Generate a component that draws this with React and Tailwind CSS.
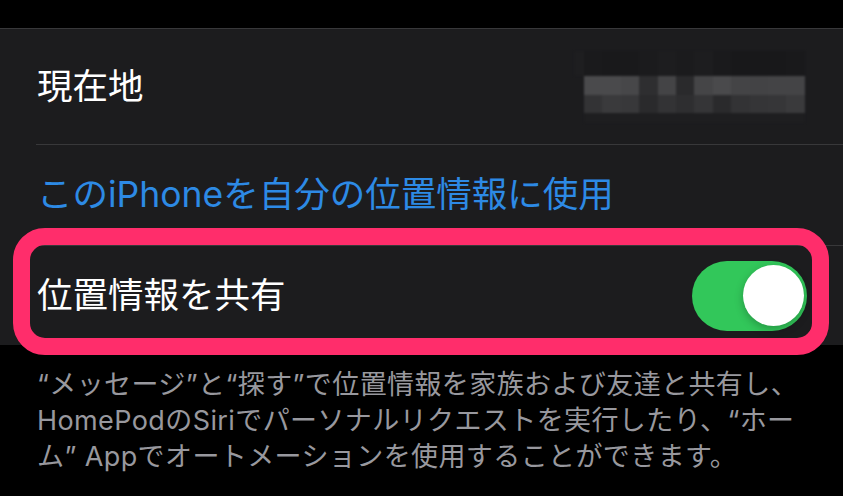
import React from "react";

const font = {
  fontFamily: '"Inter", "Noto Sans CJK JP", sans-serif',
};

// pixelated (blurred) value of the current location
const blurTop = [
  "bg-[#1a1a1c]", "bg-[#19191b]", "bg-[#19191b]", "bg-[#1b1b1d]", "bg-[#1d1d1f]", "bg-[#1b1b1d]",
  "bg-[#1d1d1f]", "bg-[#1a1a1c]", "bg-[#18181a]", "bg-[#18181a]", "bg-[#18181a]", "bg-[#19191b]",
];
const blurMid = [
  "bg-[#4a4a4c]", "bg-[#4a4a4c]", "bg-[#474749]", "bg-[#2e2e30]", "bg-[#444446]", "bg-[#2a2a2c]",
  "bg-[#454547]", "bg-[#4a4a4c]", "bg-[#444446]", "bg-[#434345]", "bg-[#444446]", "bg-[#444446]",
];
const blurLow = [
  "bg-[#333335]", "bg-[#3a3a3c]", "bg-[#38383a]", "bg-[#2a2a2c]", "bg-[#333335]", "bg-[#2e2e30]",
  "bg-[#353537]", "bg-[#2a2a2c]", "bg-[#333335]", "bg-[#353537]", "bg-[#363638]", "bg-[#3a3a3c]",
];

function BlurredValue() {
  return (
    <div className="flex flex-col blur-[1px]">
      <div className="flex h-[25px] pl-[10px] bg-[#1e1e20]">
        {blurTop.map((c, i) => (
          <div key={i} className={`w-[18.4px] ${c}`} />
        ))}
      </div>
      <div className="flex h-[19px] pl-[10px]">
        {blurMid.map((c, i) => (
          <div key={i} className={`w-[18.4px] ${c}`} />
        ))}
      </div>
      <div className="flex h-[18px] pl-[10px]">
        {blurLow.map((c, i) => (
          <div key={i} className={`w-[18.4px] ${c}`} />
        ))}
      </div>
      <div className="h-[10px] ml-[10px] w-[221px] bg-[#1e1e20]" />
    </div>
  );
}

function Toggle() {
  return (
    <div className="flex h-[70px] w-[115px] items-center justify-end rounded-full bg-[#32c75a] pr-[3px]">
      <div className="h-[61px] w-[61px] rounded-full bg-white shadow-[0_3px_8px_rgba(0,0,0,0.25)]" />
    </div>
  );
}

export default function App() {
  return (
    <div className="h-[496px] w-[843px] overflow-hidden bg-black" style={font}>
      <div className="h-[28px] bg-black" />
      <div className="border-t border-[#38383a] bg-[#1c1c1e]">
        <div className="flex h-[115px] items-center justify-between pl-[37px] pr-[38px]">
          <span className="text-[35.5px] leading-none text-white">現在地</span>
          <BlurredValue />
        </div>
        <div className="ml-[36px] h-px bg-[#38383a]" />
        <div className="flex h-[100px] items-center pl-[37px]">
          <span className="text-[35.5px] leading-none text-[#2d8ae5]">
            このiPhoneを自分の位置情報に使用
          </span>
        </div>
        <div className="ml-[36px] h-px bg-[#38383a]" />
        <div className="relative flex h-[99px] items-center justify-between pl-[37px] pr-[36px]">
          <span className="text-[35.5px] leading-none text-white">位置情報を共有</span>
          <Toggle />
          <div className="pointer-events-none absolute -top-[18px] -bottom-[10px] left-[13px] right-[14px] rounded-[32px] border-[17px] border-[#ff2d6b]" />
        </div>
      </div>
      <div className="px-[37px] pt-[22px] text-[27px] leading-[36px] tracking-[0.4px] text-[#98989e] whitespace-nowrap">
        <p>“メッセージ”と“探す”で位置情報を家族および友達と共有し、</p>
        <p>HomePodのSiriでパーソナルリクエストを実行したり、“ホー</p>
        <p>ム” Appでオートメーションを使用することができます。</p>
      </div>
    </div>
  );
}
